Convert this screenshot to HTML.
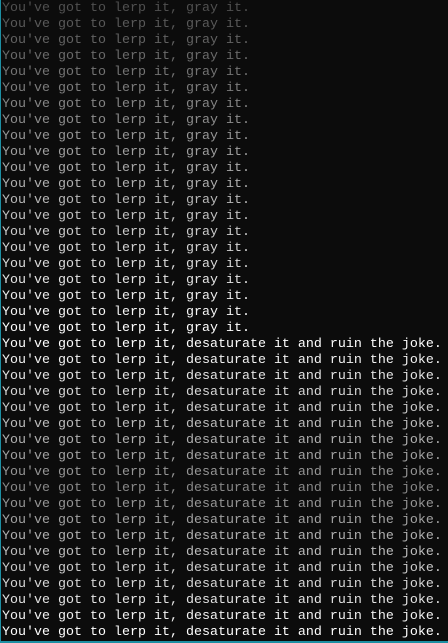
<!DOCTYPE html>
<html><head><meta charset="utf-8"><style>
html,body{margin:0;padding:0;background:#0c0c0c;}
body{width:448px;height:643px;overflow:hidden;position:relative;}
pre{margin:0;position:absolute;left:2px;top:1px;font-family:"Liberation Mono",monospace;font-size:13.33px;line-height:16px;letter-spacing:0;word-spacing:0;tab-size:8;}
pre span{display:block;}
.bl{position:absolute;left:0;top:0;width:1px;height:643px;background:#1d8fa3;}
.bb{position:absolute;left:0;bottom:0;width:448px;height:2px;background:#1d8fa3;}
</style></head><body>
<div class="bl"></div>
<pre><span style="color:#505050">You've got to lerp it, gray it.</span><span style="color:#595959">You've got to lerp it, gray it.</span><span style="color:#626262">You've got to lerp it, gray it.</span><span style="color:#6a6a6a">You've got to lerp it, gray it.</span><span style="color:#737373">You've got to lerp it, gray it.</span><span style="color:#7c7c7c">You've got to lerp it, gray it.</span><span style="color:#858585">You've got to lerp it, gray it.</span><span style="color:#8d8d8d">You've got to lerp it, gray it.</span><span style="color:#969696">You've got to lerp it, gray it.</span><span style="color:#9f9f9f">You've got to lerp it, gray it.</span><span style="color:#a8a8a8">You've got to lerp it, gray it.</span><span style="color:#b0b0b0">You've got to lerp it, gray it.</span><span style="color:#b9b9b9">You've got to lerp it, gray it.</span><span style="color:#c2c2c2">You've got to lerp it, gray it.</span><span style="color:#cbcbcb">You've got to lerp it, gray it.</span><span style="color:#d3d3d3">You've got to lerp it, gray it.</span><span style="color:#dcdcdc">You've got to lerp it, gray it.</span><span style="color:#e5e5e5">You've got to lerp it, gray it.</span><span style="color:#eeeeee">You've got to lerp it, gray it.</span><span style="color:#f6f6f6">You've got to lerp it, gray it.</span><span style="color:#ffffff">You've got to lerp it, gray it.</span><span style="color:#ffffff">You've got to lerp it, desaturate it and ruin the joke.</span><span style="color:#f2f2f2">You've got to lerp it, desaturate it and ruin the joke.</span><span style="color:#e4e4e4">You've got to lerp it, desaturate it and ruin the joke.</span><span style="color:#d7d7d7">You've got to lerp it, desaturate it and ruin the joke.</span><span style="color:#cacaca">You've got to lerp it, desaturate it and ruin the joke.</span><span style="color:#bdbdbd">You've got to lerp it, desaturate it and ruin the joke.</span><span style="color:#b0b0b0">You've got to lerp it, desaturate it and ruin the joke.</span><span style="color:#a2a2a2">You've got to lerp it, desaturate it and ruin the joke.</span><span style="color:#959595">You've got to lerp it, desaturate it and ruin the joke.</span><span style="color:#888888">You've got to lerp it, desaturate it and ruin the joke.</span><span style="color:#959595">You've got to lerp it, desaturate it and ruin the joke.</span><span style="color:#a2a2a2">You've got to lerp it, desaturate it and ruin the joke.</span><span style="color:#b0b0b0">You've got to lerp it, desaturate it and ruin the joke.</span><span style="color:#bdbdbd">You've got to lerp it, desaturate it and ruin the joke.</span><span style="color:#cacaca">You've got to lerp it, desaturate it and ruin the joke.</span><span style="color:#d7d7d7">You've got to lerp it, desaturate it and ruin the joke.</span><span style="color:#e4e4e4">You've got to lerp it, desaturate it and ruin the joke.</span><span style="color:#f2f2f2">You've got to lerp it, desaturate it and ruin the joke.</span><span style="color:#ffffff">You've got to lerp it, desaturate it and ruin the joke.</span></pre>
<div class="bb"></div>
</body></html>
